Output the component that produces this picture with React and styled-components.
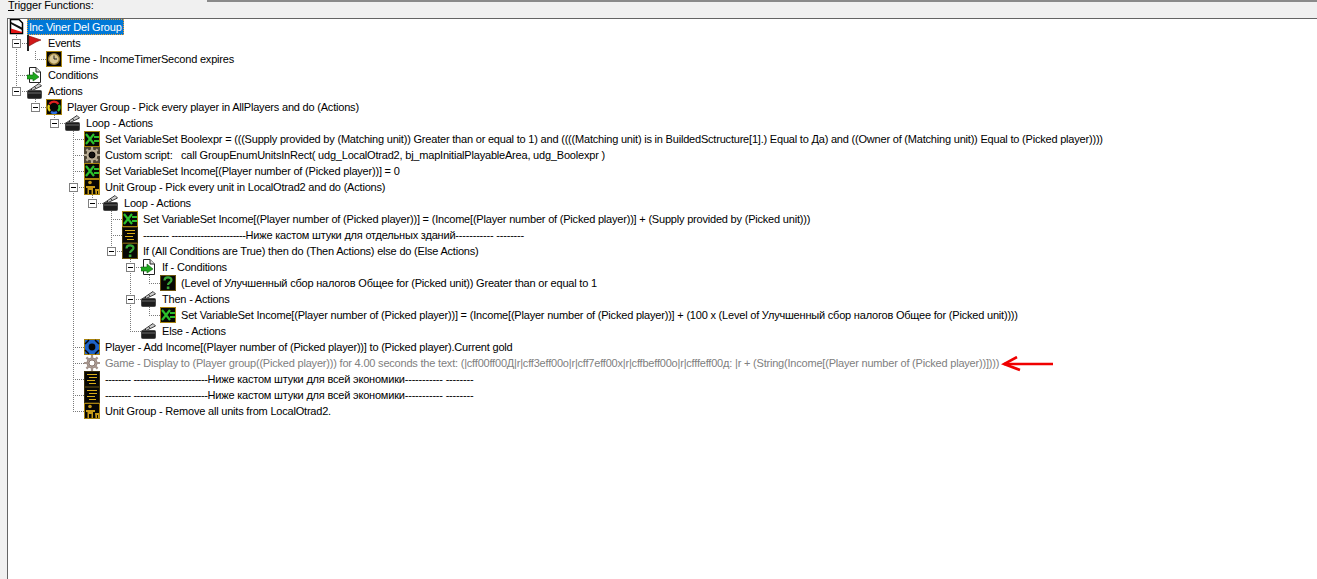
import React from "react";
import styled, { createGlobalStyle } from "styled-components";

const GlobalStyle = createGlobalStyle`
  html, body {
    margin: 0;
    height: 100%;
    overflow: hidden;
    background: #f0f0f0;
  }
`;

const dotted = "#7a7a7a";
const vDots = `repeating-linear-gradient(to bottom, ${dotted} 0 1px, transparent 1px 2px)`;
const hDots = `repeating-linear-gradient(to right, ${dotted} 0 1px, transparent 1px 2px)`;

const cellBackground = {
  blank: "none",
  pipe: `${vDots} 8px 0 / 1px 16px no-repeat`,
  tee: `${vDots} 8px 0 / 1px 16px no-repeat, ${hDots} 8px 8px / 11px 1px no-repeat`,
  elbow: `${vDots} 8px 0 / 1px 9px no-repeat, ${hDots} 8px 8px / 11px 1px no-repeat`,
};

const Page = styled.div`
  display: flex;
  flex-direction: column;
  height: 100vh;
  font-family: "Liberation Sans", Arial, sans-serif;
  font-size: 11px;
  color: #000;
`;

const Header = styled.div`
  height: 18px;
  flex: none;
  background: #f0f0f0;
`;

const TopRule = styled.div`
  height: 2px;
  margin-left: 207px;
  background: #8a8a8a;
`;

const Title = styled.label`
  display: block;
  margin: -3px 0 0 8px;
  line-height: 13px;
  letter-spacing: -0.15px;

  u {
    text-decoration: underline;
  }
`;

const Body = styled.div`
  flex: 1;
  display: flex;
  padding-left: 7px;
  min-height: 0;
`;

const TreeBox = styled.div`
  position: relative;
  flex: 1;
  background: #fff;
  border-top: 1px solid #646464;
  border-left: 1px solid #646464;
`;

const Row = styled.div`
  display: flex;
  height: 16px;
  white-space: pre;
`;

const Cell = styled.div`
  display: flex;
  flex: none;
  width: 19px;
  height: 16px;
  background: ${(p) => cellBackground[p.$kind]};
`;

const Expander = styled.span`
  display: flex;
  align-items: center;
  justify-content: center;
  box-sizing: border-box;
  width: 9px;
  height: 9px;
  margin: 4px 0 0 4px;
  background: #fff;
  border: 1px solid #808080;

  &::before {
    content: "";
    width: 5px;
    height: 1px;
    background: #000;
  }
`;

const IconSlot = styled.svg`
  flex: none;
  width: 16px;
  height: 16px;
  margin-right: 3px;
`;

const Label = styled.span`
  box-sizing: border-box;
  height: 16px;
  padding: 0 2px;
  line-height: 16px;
  letter-spacing: -0.2px;
  color: ${(p) => (p.$disabled ? "#808080" : "#000")};

  ${(p) =>
    p.$selected &&
    `
    background: #0078d7;
    color: #fff;
    outline: 1px dotted #f0a030;
    outline-offset: -1px;
  `}
`;

// the dash rulers of comment rows run narrower than the rest of the text
const Dashes = styled.span`
  letter-spacing: -0.44px;
`;

const ArrowMark = styled.svg`
  position: absolute;
  left: 993px;
  top: 337px;
  width: 54px;
  height: 16px;
`;

/* 16x16 tree icons */
const Frame = ({ children, edge = "#a8830f" }) => (
  <>
    <rect x="0.5" y="0.5" width="15" height="15" fill="#070705" stroke={edge} />
    {children}
  </>
);

const Clapper = () => (
  <>
    <path d="M1 8 L12 0.5 L14.5 3 L4 8Z" fill="#cfcfcf" stroke="#3c3c3c" />
    <path d="M4 6 L5.5 7.5 M7.5 3.8 L9 5.2" stroke="#222" />
    <rect x="0.5" y="7.5" width="14" height="8" rx="1" fill="#1d1d1d" stroke="#4a4a4a" />
    <path d="M1 10 H14" stroke="#6a6a6a" />
  </>
);

const ScriptPage = () => (
  <>
    <path d="M2.5 .5 H9 L13.5 5 V15.5 H2.5Z" fill="#fff" stroke="#222" />
    <path d="M9 .5 V5 H13.5" fill="#ddd" stroke="#222" />
    <path d="M0 8 H6 V5 L12 10 L6 14 V12 H0Z" fill="#1fa81f" stroke="#0b5c0b" strokeWidth=".6" />
  </>
);

const SetVar = () => (
  <Frame>
    <path d="M2 3 L10 13 M10 3 L2 13" stroke="#2cc02c" strokeWidth="2.2" />
    <path d="M10 6 H15 M10 10 H15" stroke="#2cc02c" strokeWidth="2" />
  </Frame>
);

const Question = () => (
  <Frame edge="#6b5410">
    <path d="M4.5 5.5 C4.5 1.5 11.5 1.5 11.5 5 C11.5 7.5 8 7.5 8 10" fill="none" stroke="#38a838" strokeWidth="2.2" />
    <rect x="6.8" y="11.5" width="2.6" height="2.6" fill="#38a838" />
  </Frame>
);

const Comment = () => (
  <Frame edge="#3a2e0a">
    <path d="M3 3.5 H13 M5 6.5 H13 M3 9.5 H11 M5 12.5 H12" stroke="#d9ad1a" strokeWidth="1.2" />
  </Frame>
);

const Units = () => (
  <Frame>
    <circle cx="6" cy="3.5" r="1.8" fill="#c79a18" />
    <path d="M2 7 H11 V9 H9 V15 H7.5 V11 H5 V15 H3.5 V9 H2Z" fill="#c79a18" />
    <path d="M11 10 H15 V15 H14 V12 H13 V15 H11.5 Z" fill="#c79a18" />
  </Frame>
);

const Gear = ({ light }) => (
  <>
    <rect width="16" height="16" fill={light ? "#fff" : "#4d4433"} />
    <circle cx="8" cy="8" r="5" fill={light ? "#b9aaa2" : "#a89a82"} stroke={light ? "#8c7a72" : "#d8cdb4"} />
    <path
      d="M8 0 V16 M0 8 H16 M2.4 2.4 L13.6 13.6 M13.6 2.4 L2.4 13.6"
      stroke={light ? "#a4948c" : "#b8ac94"}
      strokeWidth="2.2"
    />
    <circle cx="8" cy="8" r="3" fill={light ? "#fff" : "#111"} stroke={light ? "#8c7a72" : "#000"} />
  </>
);

const icons = {
  trigger: (
    <>
      <path d="M2.5 .5 H11 L14.5 4 V14.5 H2.5Z" fill="#fff" stroke="#000" strokeWidth="1.5" />
      <path d="M3 5 L14 11 V8.5 L3 3Z" fill="#111" />
      <path d="M3 9.5 L14 13 V14 H3Z" fill="#e01414" />
    </>
  ),
  flag: (
    <>
      <rect x="0" y="0" width="2" height="16" fill="#222" />
      <path d="M2 1 L14 5 L9 7 L2 11Z" fill="#d01818" stroke="#7c0d0d" strokeWidth=".6" />
    </>
  ),
  clock: (
    <Frame>
      <circle cx="8" cy="8" r="5.4" fill="#d9c795" stroke="#8e7530" strokeWidth="1.4" />
      <path d="M8 4.5 V8 H11" fill="none" stroke="#222" />
    </Frame>
  ),
  script: <ScriptPage />,
  clapper: <Clapper />,
  playerGroup: (
    <Frame>
      <path d="M3.5 5 A5.5 5.5 0 0 1 12.5 5" fill="none" stroke="#e02020" strokeWidth="2.2" />
      <path d="M3 6 A5.5 5.5 0 0 0 4 12" fill="none" stroke="#e7d31f" strokeWidth="2.2" />
      <path d="M13 6 A5.5 5.5 0 0 1 12 12" fill="none" stroke="#2dbb2d" strokeWidth="2.2" />
      <path d="M5 13 A5.5 5.5 0 0 0 11 13" fill="none" stroke="#2a6fe0" strokeWidth="2.2" />
    </Frame>
  ),
  setVar: <SetVar />,
  gear: <Gear />,
  gearLight: <Gear light />,
  units: <Units />,
  comment: <Comment />,
  question: <Question />,
  player: (
    <Frame>
      <rect x="1" y="1" width="14" height="14" fill="#1e63c8" />
      <path d="M1 5 L5 1 M15 5 L11 1 M1 11 L5 15 M15 11 L11 15" stroke="#070705" strokeWidth="1.5" />
      <circle cx="8" cy="8" r="3.4" fill="#070705" />
    </Frame>
  ),
};

const Q = "(Picked player)";
const NUM = `(Player number of ${Q})`;
const RULER = "-------- -----------------------";
const COMMENT = "Ниже кастом штуки для всей экономики----------- --------";

const tree = {
  icon: "trigger",
  text: "Inc Viner Del Group",
  selected: true,
  children: [
    {
      icon: "flag",
      text: "Events",
      children: [{ icon: "clock", text: "Time - IncomeTimerSecond expires" }],
    },
    { icon: "script", text: "Conditions" },
    {
      icon: "clapper",
      text: "Actions",
      children: [
        {
          icon: "playerGroup",
          text: "Player Group - Pick every player in AllPlayers and do (Actions)",
          children: [
            {
              icon: "clapper",
              text: "Loop - Actions",
              children: [
                {
                  icon: "setVar",
                  text: `Set VariableSet Boolexpr = (((Supply provided by (Matching unit)) Greater than or equal to 1) and ((((Matching unit) is in BuildedSctructure[1].) Equal to Да) and ((Owner of (Matching unit)) Equal to ${Q})))`,
                },
                {
                  icon: "gear",
                  text: "Custom script:   call GroupEnumUnitsInRect( udg_LocalOtrad2, bj_mapInitialPlayableArea, udg_Boolexpr )",
                },
                { icon: "setVar", text: `Set VariableSet Income[${NUM}] = 0` },
                {
                  icon: "units",
                  text: "Unit Group - Pick every unit in LocalOtrad2 and do (Actions)",
                  children: [
                    {
                      icon: "clapper",
                      text: "Loop - Actions",
                      children: [
                        {
                          icon: "setVar",
                          text: `Set VariableSet Income[${NUM}] = (Income[${NUM}] + (Supply provided by (Picked unit)))`,
                        },
                        {
                          icon: "comment",
                          ruler: RULER,
                          text: "Ниже кастом штуки для отдельных зданий----------- --------",
                        },
                        {
                          icon: "question",
                          text: "If (All Conditions are True) then do (Then Actions) else do (Else Actions)",
                          children: [
                            {
                              icon: "script",
                              text: "If - Conditions",
                              children: [
                                {
                                  icon: "question",
                                  text: "(Level of Улучшенный сбор налогов Общее for (Picked unit)) Greater than or equal to 1",
                                },
                              ],
                            },
                            {
                              icon: "clapper",
                              text: "Then - Actions",
                              children: [
                                {
                                  icon: "setVar",
                                  text: `Set VariableSet Income[${NUM}] = (Income[${NUM}] + (100 x (Level of Улучшенный сбор налогов Общее for (Picked unit))))`,
                                },
                              ],
                            },
                            { icon: "clapper", text: "Else - Actions" },
                          ],
                        },
                      ],
                    },
                  ],
                },
                { icon: "player", text: `Player - Add Income[${NUM}] to ${Q}.Current gold` },
                {
                  icon: "gearLight",
                  disabled: true,
                  text: `Game - Display to (Player group(${Q})) for 4.00 seconds the text: (|cff00ff00Д|r|cff3eff00o|r|cff7eff00x|r|cffbeff00o|r|cfffeff00д: |r + (String(Income[${NUM}])))`,
                },
                { icon: "comment", ruler: RULER, text: COMMENT },
                { icon: "comment", ruler: RULER, text: COMMENT },
                { icon: "units", text: "Unit Group - Remove all units from LocalOtrad2." },
              ],
            },
          ],
        },
      ],
    },
  ],
};

// walks the tree into flat rows, each with the guide cells in front of it
const flatten = (node, guides = [], rows = []) => {
  rows.push({ ...node, guides });
  const kids = node.children || [];
  kids.forEach((kid, i) => {
    const last = i === kids.length - 1;
    const parentGuides = guides.map((g) => (g.kind === "tee" || g.kind === "pipe" ? "pipe" : "blank"));
    const kidGuides = [
      ...parentGuides.map((kind) => ({ kind })),
      { kind: last ? "elbow" : "tee", open: !!kid.children },
    ];
    flatten(kid, kidGuides, rows);
  });
  return rows;
};

const TreeRow = ({ row }) => (
  <Row>
    {row.guides.map((g, i) => (
      <Cell key={i} $kind={g.kind}>
        {g.open && <Expander />}
      </Cell>
    ))}
    <IconSlot viewBox="0 0 16 16">{icons[row.icon]}</IconSlot>
    <Label $selected={row.selected} $disabled={row.disabled}>
      {row.ruler && <Dashes>{row.ruler}</Dashes>}
      {row.text}
    </Label>
  </Row>
);

export default function App() {
  return (
    <Page>
      <GlobalStyle />
      <Header>
        <TopRule />
        <Title>
          <u>T</u>rigger Functions:
        </Title>
      </Header>
      <Body>
        <TreeBox>
          {flatten(tree).map((row, i) => (
            <TreeRow key={i} row={row} />
          ))}
          <ArrowMark viewBox="0 0 54 16">
            <path d="M3 8 H52" stroke="#f00000" strokeWidth="2.4" />
            <path d="M16 1 L3 8 L19 14" fill="none" stroke="#f00000" strokeWidth="2.6" />
          </ArrowMark>
        </TreeBox>
      </Body>
    </Page>
  );
}
